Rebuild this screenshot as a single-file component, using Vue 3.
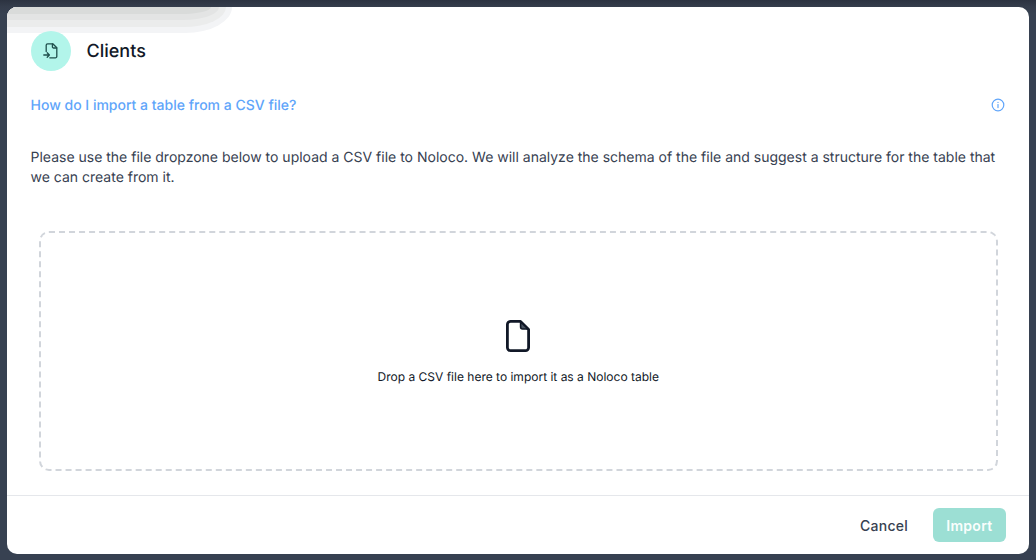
<template>
  <div class="backdrop">
    <div class="modal">
      <div class="smear">
        <div class="smear-band band-4"></div>
        <div class="smear-band band-3"></div>
        <div class="smear-band band-2"></div>
        <div class="smear-band band-1"></div>
      </div>
      <div class="modal-body">
        <div class="title-row">
          <div class="title-icon">
            <svg width="16" height="16" viewBox="0 0 16 16" fill="none" stroke="#1f4f4c" stroke-width="1.3" stroke-linecap="round" stroke-linejoin="round">
              <path d="M3.2 8.4V2.2a1.4 1.4 0 0 1 1.4-1.4h5.2l4 4v8.6a1.4 1.4 0 0 1-1.4 1.4H6.8" />
              <path d="M9.4 1v2.8a1.2 1.2 0 0 0 1.2 1.2h3" />
              <path d="M.8 12h5.6M4.2 9.8l2.2 2.2-2.2 2.2" />
            </svg>
          </div>
          <h1 class="title">Clients</h1>
        </div>

        <div class="help-row">
          <a class="help-link">{{ helpText }}</a>
          <svg class="info-icon" width="14" height="14" viewBox="0 0 14 14" fill="none" stroke="#60a5fa" stroke-width="1.2" stroke-linecap="round">
            <circle cx="7" cy="7" r="5.8" />
            <path d="M7 6.6v3" />
            <path d="M7 4.3v.1" />
          </svg>
        </div>

        <p class="description">
          Please use the file dropzone below to upload a CSV file to Noloco. We will analyze the schema of the file and suggest a structure for the table that we can create from it.
        </p>

        <div class="dropzone">
          <svg width="26" height="34" viewBox="0 0 26 34" fill="none" stroke="#111827" stroke-width="2.8" stroke-linejoin="round">
            <path d="M5.5 2.4h10l8.1 8.1v18a3.1 3.1 0 0 1-3.1 3.1h-15a3.1 3.1 0 0 1-3.1-3.1v-23a3.1 3.1 0 0 1 3.1-3.1z" />
            <path d="M15.6 3v5a2 2 0 0 0 2 2h5.4z" stroke-width="1.6" fill="#4b5563" />
          </svg>
          <span class="dropzone-text">Drop a CSV file here to import it as a Noloco table</span>
        </div>
      </div>

      <div class="modal-footer">
        <button class="btn btn-cancel">Cancel</button>
        <button class="btn btn-import">Import</button>
      </div>
    </div>
  </div>
</template>

<script setup>
const helpText = 'How do I import a table from a CSV file?'
</script>

<style>
html, body {
  margin: 0;
  background: #374151;
}
</style>

<style scoped>
.backdrop {
  width: 1036px;
  height: 560px;
  box-sizing: border-box;
  padding: 7px 7px 6px 7px;
  background: linear-gradient(180deg, #2c3341 0, #353d4c 7px, #374151 14px);
  font-family: Inter, "Liberation Sans", sans-serif;
  text-rendering: geometricPrecision;
}

.modal {
  position: relative;
  height: 100%;
  display: flex;
  flex-direction: column;
  background: #fff;
  border-radius: 10px;
  overflow: hidden;
}

.smear {
  position: absolute;
  top: 0;
  left: 0;
}

.smear-band {
  position: absolute;
  top: 0;
  left: 0;
}

.band-1 {
  width: 204px;
  height: 7px;
  background: #d9dbda;
  border-bottom-right-radius: 30px 7px;
}

.band-2 {
  width: 212px;
  height: 13px;
  background: #e3e4e4;
  border-bottom-right-radius: 36px 13px;
}

.band-3 {
  width: 219px;
  height: 20px;
  background: #ebecec;
  border-bottom-right-radius: 42px 20px;
}

.band-4 {
  width: 225px;
  height: 26px;
  background: #f3f4f6;
  border-bottom-right-radius: 47px 26px;
}

.modal-body {
  position: relative;
  flex: 1;
  padding: 24px 32px 24px 23.5px;
  display: flex;
  flex-direction: column;
}

.title-row {
  display: flex;
  align-items: center;
  gap: 16px;
}

.title-icon {
  width: 40px;
  height: 40px;
  border-radius: 50%;
  background: #b2f5ea;
  display: flex;
  align-items: center;
  justify-content: center;
}

.title {
  margin: 0;
  padding-top: 2px;
  font-size: 18px;
  font-weight: 500;
  line-height: 28px;
  color: #111827;
}

.help-row {
  margin-top: 24px;
  display: flex;
  align-items: center;
  justify-content: space-between;
  height: 20px;
}

.help-link {
  font-size: 14px;
  font-weight: 500;
  color: #60a5fa;
}

.info-icon {
  margin-right: -8px;
}

.description {
  margin: 33px -8px 0 0;
  font-size: 14px;
  line-height: 20px;
  color: #374151;
}

.dropzone {
  flex: 1;
  margin: 43px -0.5px 0 8.5px;
  padding-top: 2px;
  border: 2px dashed #d1d5db;
  border-radius: 10px;
  display: flex;
  flex-direction: column;
  align-items: center;
  justify-content: center;
  gap: 16px;
}

.dropzone-text {
  font-size: 12px;
  line-height: 16px;
  color: #111827;
}

.modal-footer {
  height: 59px;
  box-sizing: border-box;
  border-top: 1px solid #e5e7eb;
  display: flex;
  align-items: center;
  justify-content: flex-end;
  gap: 11px;
  padding: 0 23px 0 0;
}

.btn {
  height: 34px;
  border: none;
  border-radius: 6px;
  padding: 0 13.5px;
  font-family: inherit;
  font-size: 14px;
  font-weight: 500;
  letter-spacing: 0.3px;
  background: transparent;
}

.btn-cancel {
  color: #374151;
}

.btn-import {
  background: #9cdfd4;
  color: #fafefd;
  font-weight: 600;
}
</style>
